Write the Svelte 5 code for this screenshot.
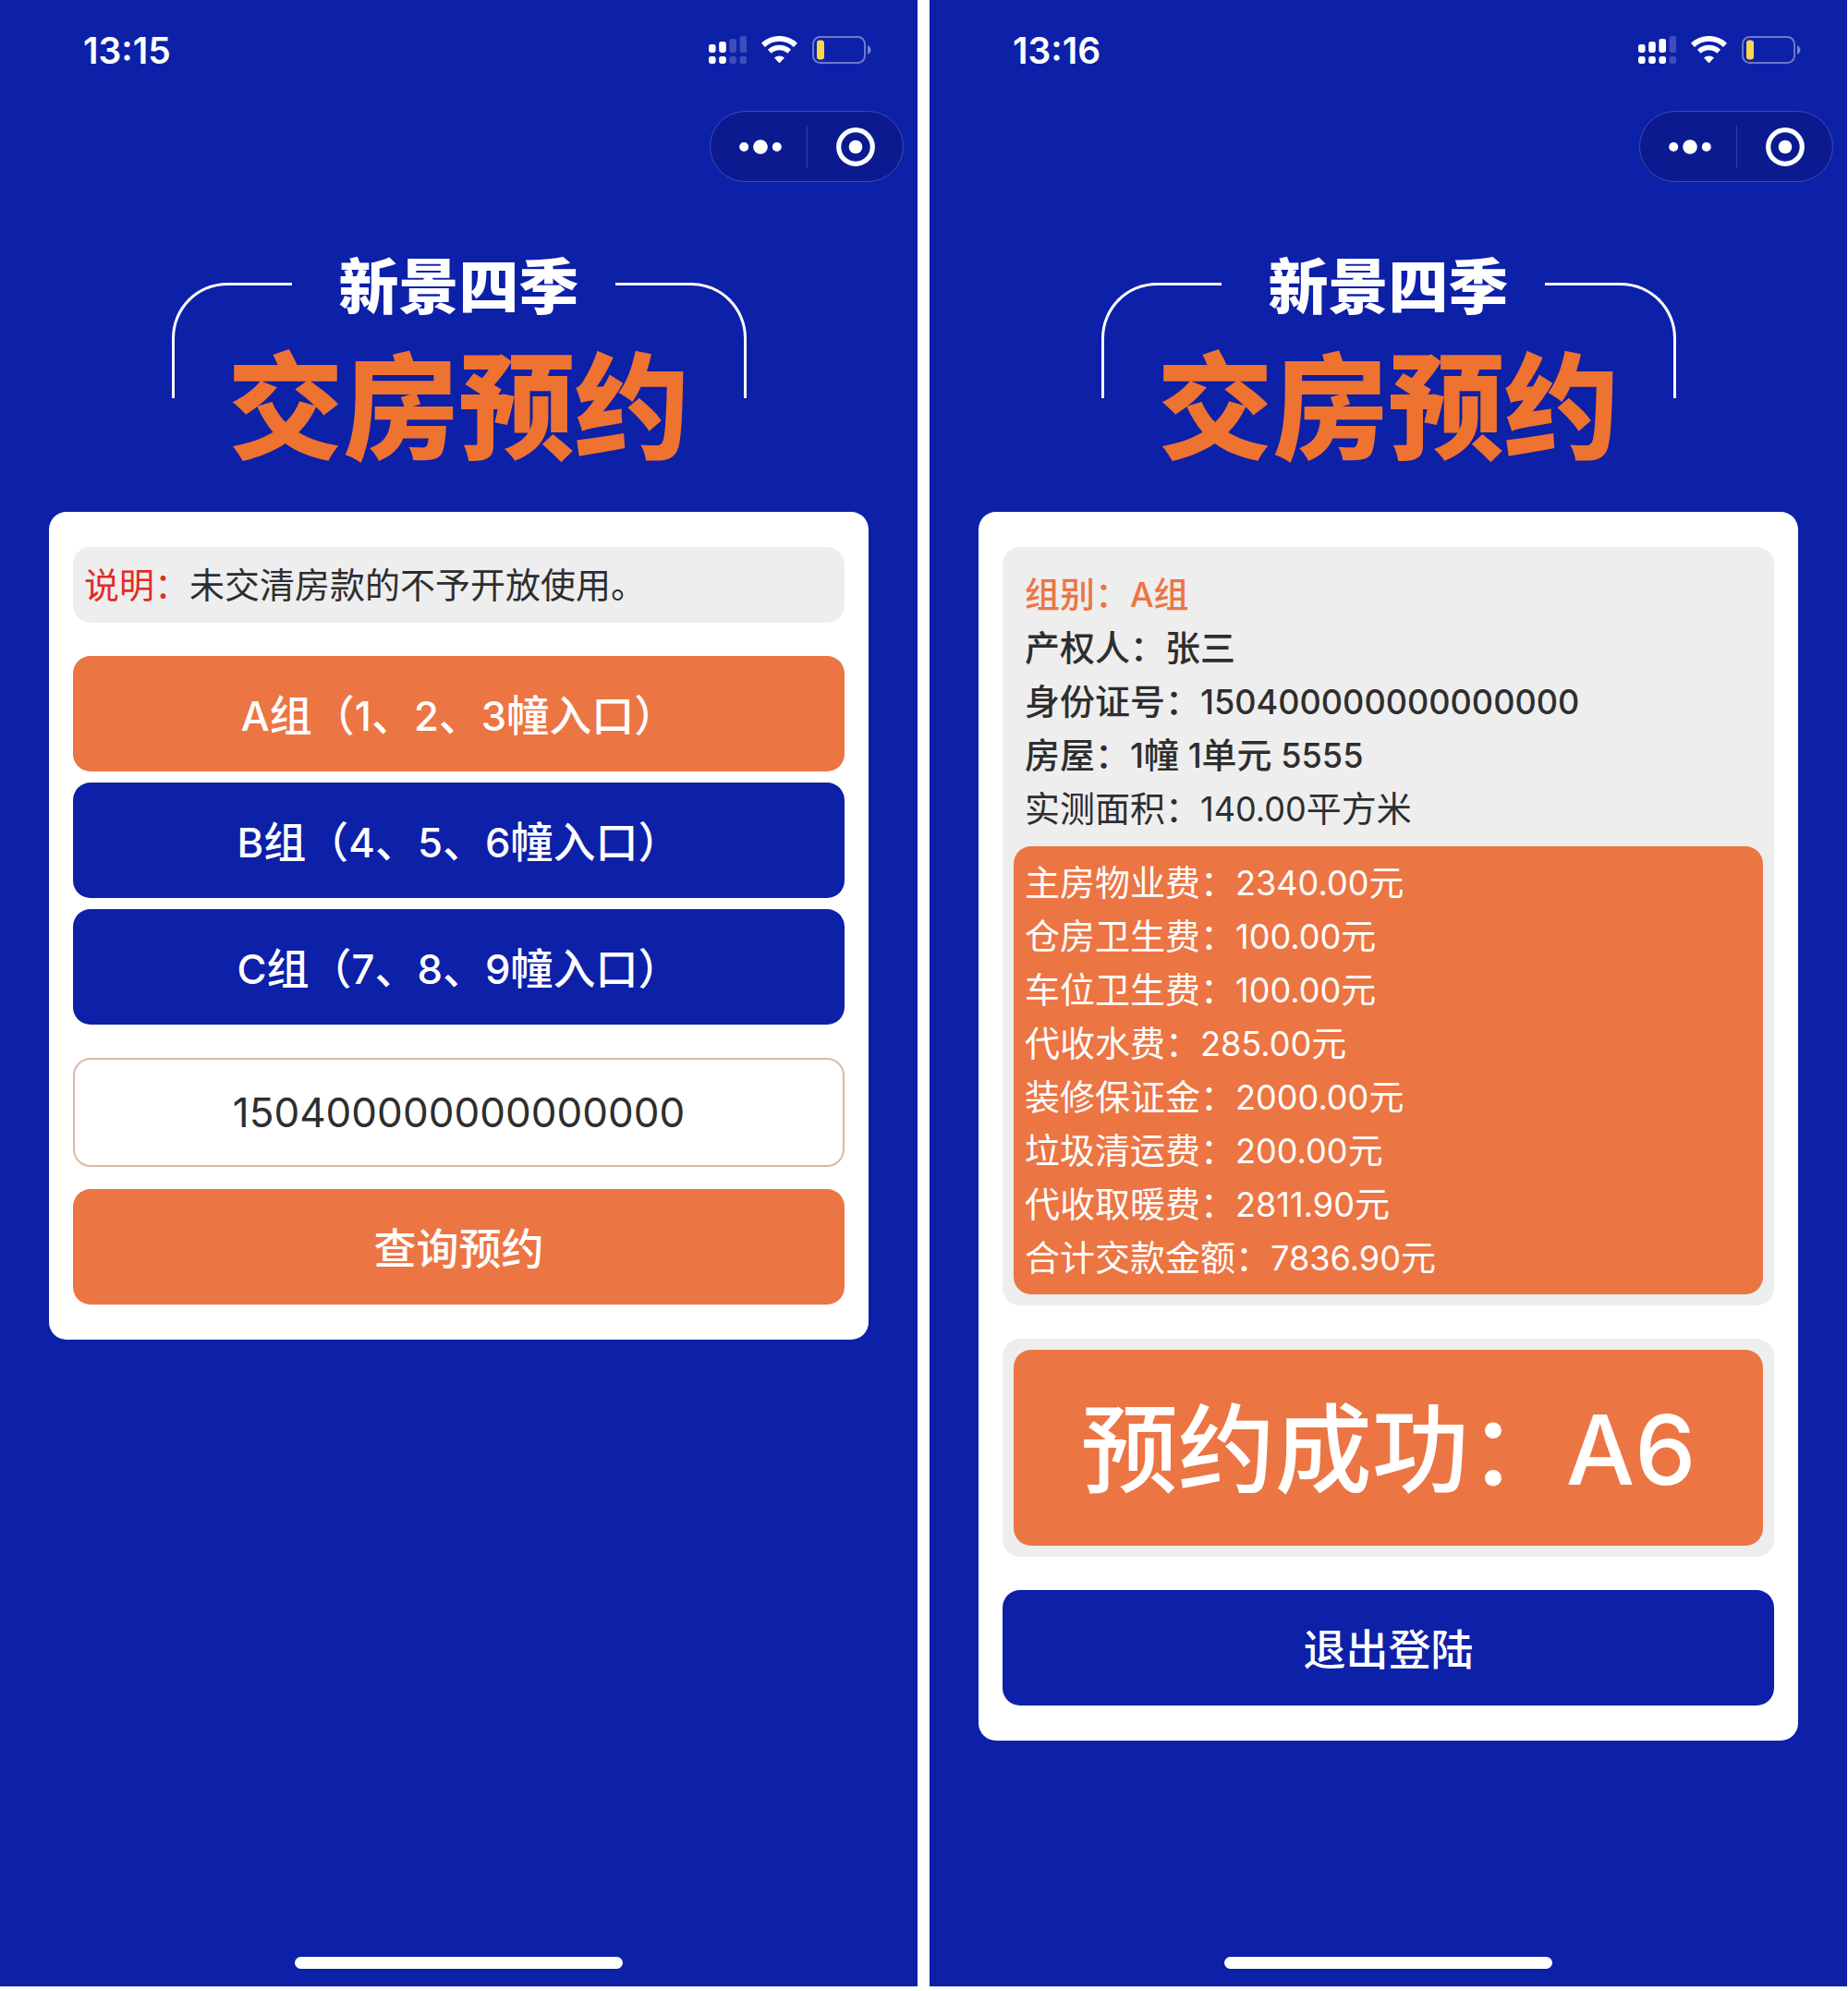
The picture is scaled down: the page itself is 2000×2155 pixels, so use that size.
<script lang="ts">
    let idNumber = '150400000000000000';
    let selected = 'A';

    const groups = [
        { key: 'A', label: 'A组（1、2、3幢入口）' },
        { key: 'B', label: 'B组（4、5、6幢入口）' },
        { key: 'C', label: 'C组（7、8、9幢入口）' }
    ];

    const info = [
        { label: '组别', value: 'A组', kind: 'group' },
        { label: '产权人', value: '张三', kind: 'strong' },
        { label: '身份证号', value: '150400000000000000', kind: 'strong' },
        { label: '房屋', value: '1幢 1单元 5555', kind: 'strong' },
        { label: '实测面积', value: '140.00平方米', kind: '' }
    ];

    const fees = [
        { label: '主房物业费', value: '2340.00元' },
        { label: '仓房卫生费', value: '100.00元' },
        { label: '车位卫生费', value: '100.00元' },
        { label: '代收水费', value: '285.00元' },
        { label: '装修保证金', value: '2000.00元' },
        { label: '垃圾清运费', value: '200.00元' },
        { label: '代收取暖费', value: '2811.90元' },
        { label: '合计交款金额', value: '7836.90元' }
    ];

    // latin letters and digits get their own font, so split them from the Chinese
    function runs(text: string) {
        return text.match(/[A-Za-z0-9. ]+|[^A-Za-z0-9. ]+/g) ?? [];
    }

    function isLatin(run: string) {
        return /^[A-Za-z0-9. ]/.test(run);
    }
</script>

{#snippet mixed(text)}{#each runs(text) as run}{#if isLatin(run)}<span class="latin">{run}</span>{:else}{run}{/if}{/each}{/snippet}

{#snippet phoneTop(time, bars)}
    <div class="status-bar">
        <span class="time">{time}</span>
        <div class="status-icons">
            <svg class="signal" width="41" height="30" viewBox="0 0 41 30" fill="#fff">
                {#each [0, 1, 2, 3] as i}
                    <g opacity={i < bars ? 1 : 0.2}>
                        <rect x={i * 11.2} y={9 - i * 3} width="7.6" height={9 + i * 3} rx="2.4" />
                        <rect x={i * 11.2} y="22" width="7.6" height="8" rx="2.4" />
                    </g>
                {/each}
            </svg>
            <svg class="wifi" width="39" height="30" viewBox="0 0 39 30" fill="none" stroke="#fff">
                <path d="M2 9.8 A25.5 25.5 0 0 1 37 9.8" stroke-width="5.8" />
                <path d="M8.8 16.8 A15.5 15.5 0 0 1 30.2 16.8" stroke-width="5.4" />
                <path d="M14 23.6 A8.2 8.2 0 0 1 25 23.6 L20.2 28.8 Q19.5 29.4 18.8 28.8 Z" fill="#fff" stroke="none" />
            </svg>
            <svg class="battery" width="64" height="30" viewBox="0 0 64 30">
                <rect x="1" y="1" width="56" height="28" rx="7.5" fill="none" stroke="#fff" stroke-opacity="0.4" stroke-width="2" />
                <path d="M60 10 Q63.5 12 63.5 15 Q63.5 18 60 20 Z" fill="#fff" fill-opacity="0.45" />
                <rect x="5" y="4.5" width="8" height="21" rx="3.2" fill="#f9d74b" />
            </svg>
        </div>
    </div>
    <div class="capsule">
        <button class="capsule-btn" aria-label="更多">
            <svg width="46" height="16" viewBox="0 0 46 16" fill="#fff">
                <circle cx="5.2" cy="8" r="5" />
                <circle cx="23" cy="8" r="7.8" />
                <circle cx="40.8" cy="8" r="5" />
            </svg>
        </button>
        <button class="capsule-btn" aria-label="关闭">
            <svg width="42" height="42" viewBox="0 0 42 42">
                <circle cx="21" cy="21" r="18.3" fill="none" stroke="#fff" stroke-width="5.2" />
                <circle cx="21" cy="21" r="7.3" fill="#fff" />
            </svg>
        </button>
    </div>
    <header class="banner">
        <div class="brackets">
            <span class="bracket left"></span>
            <span class="bracket right"></span>
        </div>
        <div class="titles">
            <p class="estate">新景四季</p>
            <h1>交房预约</h1>
        </div>
    </header>
{/snippet}

<main class="screens">
    <section class="phone">
        {@render phoneTop('13:15', 2)}
        <div class="card">
            <p class="note"><span class="red">说明：</span>未交清房款的不予开放使用。</p>
            <div class="groups">
                {#each groups as group}
                    <button
                        class="btn"
                        class:orange={selected === group.key}
                        on:click={() => (selected = group.key)}>{@render mixed(group.label)}</button>
                {/each}
            </div>
            <form class="query" on:submit|preventDefault>
                <input type="text" aria-label="身份证号" bind:value={idNumber} />
                <button type="submit" class="btn orange">查询预约</button>
            </form>
        </div>
        <div class="home-bar"></div>
    </section>

    <section class="phone">
        {@render phoneTop('13:16', 3)}
        <div class="card">
            <div class="panel details">
                <dl class="info">
                    {#each info as row}
                        <div class="row {row.kind}">
                            <dt>{row.label}：</dt>
                            <dd>{@render mixed(row.value)}</dd>
                        </div>
                    {/each}
                </dl>
                <dl class="fees">
                    {#each fees as row}
                        <div class="row">
                            <dt>{row.label}：</dt>
                            <dd>{@render mixed(row.value)}</dd>
                        </div>
                    {/each}
                </dl>
            </div>
            <div class="panel">
                <p class="result">{@render mixed('预约成功：A6')}</p>
            </div>
            <button class="btn">退出登陆</button>
        </div>
        <div class="home-bar"></div>
    </section>
</main>

<style>
    :global(body) {
        background: #fff;
    }
    .screens {
        display: grid;
        grid-template-columns: 1fr 1fr;
        gap: 13px;
        padding: 0 1px 5px 0;
        min-height: 100vh;
        box-sizing: border-box;
        font-family: 'Noto Sans CJK SC', sans-serif;
        color: #2e2e2e;
    }
    .phone {
        display: flex;
        flex-direction: column;
        background: #0d20a8;
    }
    p,
    h1,
    dl,
    dd {
        margin: 0;
    }
    button,
    input {
        font-family: inherit;
        box-sizing: border-box;
    }
    svg {
        display: block;
    }
    .latin {
        font-family: Inter, sans-serif;
        font-size: 95%;
        line-height: 1;
    }

    .status-bar {
        display: flex;
        justify-content: space-between;
        align-items: center;
        height: 108px;
        padding: 0 50px 0 90px;
        color: #fff;
    }
    .time {
        font-family: Inter, sans-serif;
        font-size: 39px;
        font-weight: 600;
    }
    .status-icons {
        display: flex;
        align-items: center;
        gap: 16px;
    }

    .capsule {
        align-self: flex-end;
        display: flex;
        align-items: center;
        width: 210px;
        height: 77px;
        margin: 12px 15px 0 0;
        box-sizing: border-box;
        border: 1px solid #3a4bb4;
        border-radius: 39px;
        background: #0b1b8f;
    }
    .capsule-btn {
        display: flex;
        justify-content: center;
        align-items: center;
        width: 50%;
        height: 46px;
        padding: 0 0 0 4px;
        border: none;
        background: none;
    }
    .capsule-btn + .capsule-btn {
        padding: 0;
        border-left: 1px solid #2f3f9f;
    }

    .banner {
        display: grid;
        width: 622px;
        margin: 69px auto 46px;
    }
    .brackets,
    .titles {
        grid-area: 1 / 1;
    }
    .brackets {
        display: flex;
        justify-content: space-between;
        padding-top: 40px;
    }
    .bracket {
        width: 130px;
        height: 125px;
        box-sizing: border-box;
        border-top: 3px solid #fff;
    }
    .bracket.left {
        border-left: 3px solid #fff;
        border-top-left-radius: 60px;
    }
    .bracket.right {
        width: 142px;
        border-right: 3px solid #fff;
        border-top-right-radius: 60px;
    }
    .titles {
        text-align: center;
    }
    .estate {
        color: #fff;
        font-size: 65px;
        font-weight: 900;
        line-height: 80px;
    }
    h1 {
        padding-top: 12px;
        color: #ee7230;
        font-size: 125px;
        font-weight: 900;
        line-height: 150px;
    }

    .card {
        display: flex;
        flex-direction: column;
        gap: 36px;
        margin: 0 53px;
        padding: 38px 26px;
        border-radius: 19px;
        background: #fff;
    }
    .note {
        padding: 10px 12px 14px;
        border-radius: 19px;
        background: #eee;
        font-size: 38px;
        line-height: 58px;
    }
    .red {
        color: #e22c25;
    }
    .groups {
        display: flex;
        flex-direction: column;
        gap: 12px;
    }
    .btn {
        width: 100%;
        height: 125px;
        padding: 0 0 4px;
        border: none;
        border-radius: 19px;
        background: #0d20a8;
        color: #fff;
        font-size: 46px;
        font-weight: 500;
        cursor: pointer;
    }
    .btn.orange {
        background: #ec7544;
    }
    .query {
        display: flex;
        flex-direction: column;
        gap: 24px;
    }
    input {
        width: 100%;
        height: 118px;
        border: 2px solid #dcb8a8;
        border-radius: 19px;
        background: #fff;
        color: #2e2e2e;
        font-family: Inter, sans-serif;
        font-size: 44px;
        text-align: center;
        outline: none;
    }

    .panel {
        padding: 12px;
        border-radius: 19px;
        background: #eee;
    }
    .details {
        font-size: 38px;
        line-height: 58px;
    }
    .row {
        display: flex;
    }
    .info {
        padding: 8px 12px 14px;
    }
    .group {
        color: #ec7544;
        font-weight: 500;
    }
    .strong {
        font-weight: 500;
    }
    .fees {
        padding: 8px 12px 13px;
        border-radius: 19px;
        background: #ec7544;
        color: #fff;
    }
    .result {
        padding-bottom: 12px;
        border-radius: 19px;
        background: #ec7544;
        color: #fff;
        font-size: 105px;
        font-weight: 500;
        line-height: 200px;
        text-align: center;
    }
    .result .latin {
        font-size: 100%;
    }

    .home-bar {
        width: 355px;
        height: 13px;
        margin: auto auto 19px;
        border-radius: 7px;
        background: #fff;
    }
</style>
